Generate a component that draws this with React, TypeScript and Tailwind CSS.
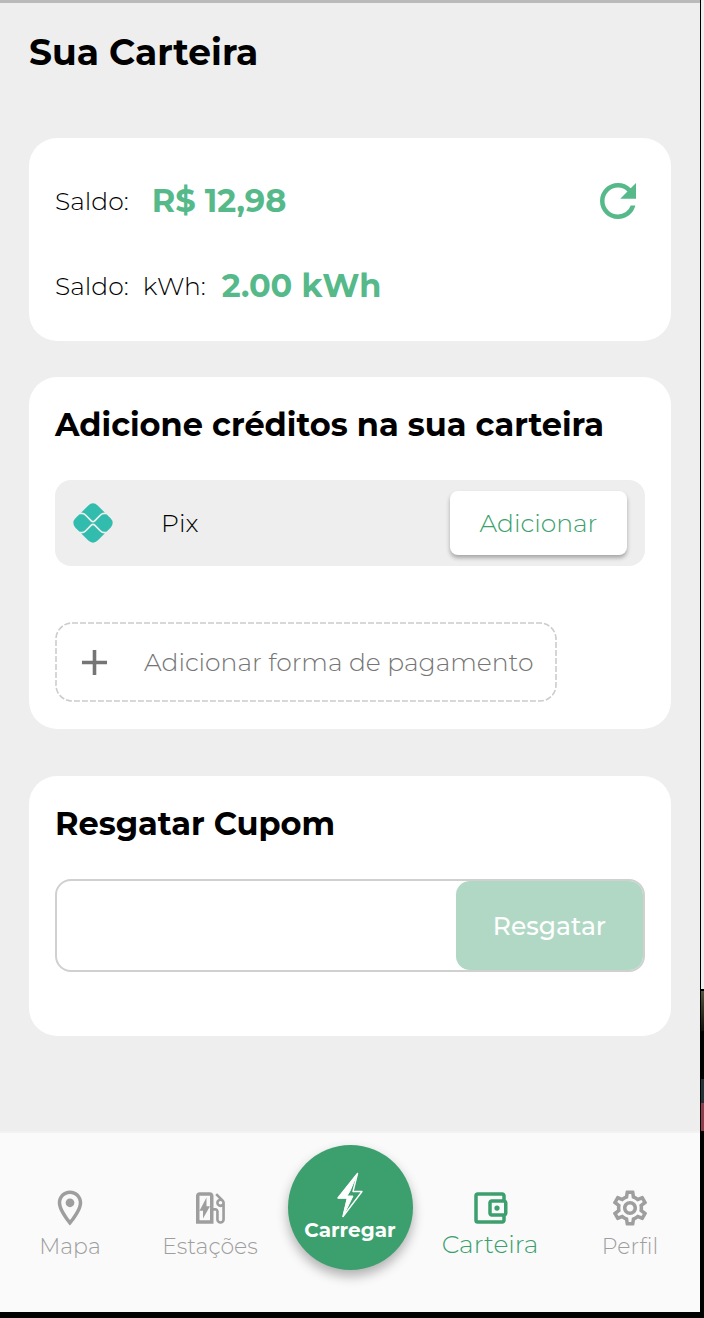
import { useState } from 'react';
import type { IconType } from 'react-icons';
import {
  MdAdd,
  MdOutlineAccountBalanceWallet,
  MdOutlineEvStation,
  MdOutlineLocationOn,
  MdOutlineSettings,
  MdRefresh,
} from 'react-icons/md';

interface TabProps {
  label: string;
  icon: IconType;
  active?: boolean;
}

const PixLogo: React.FC = () => (
  <svg className="size-10" viewBox="0 0 40 40" aria-hidden="true">
    <path
      d="M15.6 2.2a6.2 6.2 0 0 1 8.8 0l13.4 13.4a6.2 6.2 0 0 1 0 8.8L24.4 37.8a6.2 6.2 0 0 1-8.8 0L2.2 24.4a6.2 6.2 0 0 1 0-8.8z"
      fill="#32bcad"
    />
    <path
      d="M5 10.4h3.6c1.6 0 2.8.5 3.9 1.6l5.8 5.8c1 1 2.4 1 3.4 0l5.8-5.8c1.1-1.1 2.3-1.6 3.9-1.6H35M5 29.6h3.6c1.6 0 2.8-.5 3.9-1.6l5.8-5.8c1-1 2.4-1 3.4 0l5.8 5.8c1.1 1.1 2.3 1.6 3.9 1.6H35"
      fill="none"
      stroke="#eeeeee"
      strokeWidth="1.7"
    />
  </svg>
);

const BoltLogo: React.FC = () => (
  <svg className="h-[46px] w-[26px]" viewBox="0 0 26 46" aria-hidden="true">
    <path
      d="M20.5 1.5 1 26h9.5L6 44.5 25 19.5h-9z"
      fill="none"
      stroke="white"
      strokeWidth="1.4"
      strokeLinejoin="round"
    />
    <path
      d="M20.5 1.5 1 26h9.5L6 44.5l10-20.5h-6l3-5z"
      fill="white"
      stroke="white"
      strokeWidth="1"
      strokeLinejoin="round"
    />
  </svg>
);

const Tab: React.FC<TabProps> = ({ label, icon: Icon, active }) => (
  <a
    href="#"
    className={
      active
        ? 'flex flex-col items-center text-[#3c9f6e]'
        : 'flex flex-col items-center text-[#9e9e9e]'
    }
  >
    <Icon className="size-[42px]" />
    <span
      className={
        active
          ? 'text-[25px] leading-[30px] font-light'
          : 'text-[22px] leading-9 font-light'
      }
    >
      {label}
    </span>
  </a>
);

const App: React.FC = () => {
  const [coupon, setCoupon] = useState('');

  return (
    <div className="flex min-h-screen bg-[#eeeeee] font-['Montserrat','Inter',sans-serif] text-black">
      <div className="flex min-w-0 flex-1 flex-col border-t-3 border-[#bababa]">
        <main className="flex-1 px-[29px] pt-[25px]">
          <h1 className="text-[36px] leading-12 font-bold">Sua Carteira</h1>

          <section className="mt-[62px] rounded-[28px] bg-white px-[26px] pt-[33px] pb-[26px]">
            <div className="flex items-center">
              <span className="pt-0.5 text-[25px] font-light">Saldo:</span>
              <strong className="ml-[23px] text-[32px] leading-[59px] text-[#55b98a]">
                R$ 12,98
              </strong>
              <button
                type="button"
                aria-label="Atualizar saldo"
                className="ml-auto text-[#55b98a]"
              >
                <MdRefresh className="size-[54px]" />
              </button>
            </div>
            <div className="mt-[26px] flex items-center">
              <span className="pt-0.5 text-[25px] font-light">Saldo:</span>
              <span className="ml-3.5 pt-0.5 text-[25px] font-light">
                kWh:
              </span>
              <strong className="ml-4 text-[32px] leading-[59px] text-[#55b98a]">
                2.00 kWh
              </strong>
            </div>
          </section>

          <section className="mt-9 rounded-[28px] bg-white px-[26px] pt-6 pb-[27px]">
            <h2 className="text-[32px] leading-12 font-bold">
              Adicione créditos na sua carteira
            </h2>
            <div className="mt-[31px] flex h-[86px] items-center rounded-2xl bg-[#eeeeee] px-[18px]">
              <PixLogo />
              <span className="ml-12 pt-0.5 text-[25px] font-light">Pix</span>
              <button
                type="button"
                className="ml-auto h-16 w-[177px] rounded-lg bg-white pt-0.5 text-[25px] font-light text-[#3c9f6e] shadow-[0_3px_4px_rgba(0,0,0,0.3)]"
              >
                Adicionar
              </button>
            </div>
            <button
              type="button"
              className="relative mt-14 flex h-20 w-[502px] items-center pl-[18px] text-[#757575]"
            >
              <svg className="absolute inset-0 size-full" aria-hidden="true">
                <rect
                  x="1"
                  y="1"
                  width="500"
                  height="78"
                  rx="16"
                  fill="none"
                  stroke="#cccccc"
                  strokeWidth="1.6"
                  strokeDasharray="6 2"
                />
              </svg>
              <MdAdd className="size-[43px]" />
              <span className="ml-7 pt-0.5 text-[25px] font-light">
                Adicionar forma de pagamento
              </span>
            </button>
          </section>

          <section className="mt-[47px] rounded-[28px] bg-white px-[26px] pt-6 pb-16">
            <h2 className="text-[32px] leading-12 font-bold">
              <label htmlFor="coupon">Resgatar Cupom</label>
            </h2>
            <div className="mt-[31px] flex h-[93px] rounded-2xl border-2 border-[#d0d0d0]">
              <input
                id="coupon"
                type="text"
                value={coupon}
                onChange={(e) => setCoupon(e.target.value)}
                className="min-w-0 flex-1 px-4 text-[25px] outline-none"
              />
              <button
                type="button"
                className="w-[187px] rounded-[14px] bg-[#b1d8c5] pt-0.5 text-[25px] font-medium text-white"
              >
                Resgatar
              </button>
            </div>
          </section>
        </main>

        <nav className="grid h-[181px] grid-cols-5 border-t-2 border-[#f2f2f2] bg-[#fafafa]">
          <div className="pt-[54px]">
            <Tab label="Mapa" icon={MdOutlineLocationOn} />
          </div>
          <div className="pt-[54px]">
            <Tab label="Estações" icon={MdOutlineEvStation} />
          </div>
          <div className="flex justify-center pt-3">
            <button
              type="button"
              className="flex size-[125px] flex-col items-center rounded-full bg-[#3c9f6e] pt-[27px] text-white shadow-[0_6px_12px_rgba(0,0,0,0.3)]"
            >
              <BoltLogo />
              <span className="text-[20px] leading-6 font-bold">Carregar</span>
            </button>
          </div>
          <div className="pt-[54px]">
            <Tab label="Carteira" icon={MdOutlineAccountBalanceWallet} active />
          </div>
          <div className="pt-[54px]">
            <Tab label="Perfil" icon={MdOutlineSettings} />
          </div>
        </nav>
        <div className="h-1.5 bg-black" />
      </div>

      <div className="flex w-1 flex-col border-l border-black">
        <div className="h-[989px] bg-[#eeeeee]" />
        <div className="flex-1 bg-black pt-0.5">
          <div className="h-10 bg-linear-to-b from-[#55553f] to-[#11110d]" />
          <div className="h-12 bg-black" />
          <div className="h-6 bg-[#243436]" />
          <div className="h-7 bg-[#8c3e4c]" />
        </div>
      </div>
    </div>
  );
};

export default App;
